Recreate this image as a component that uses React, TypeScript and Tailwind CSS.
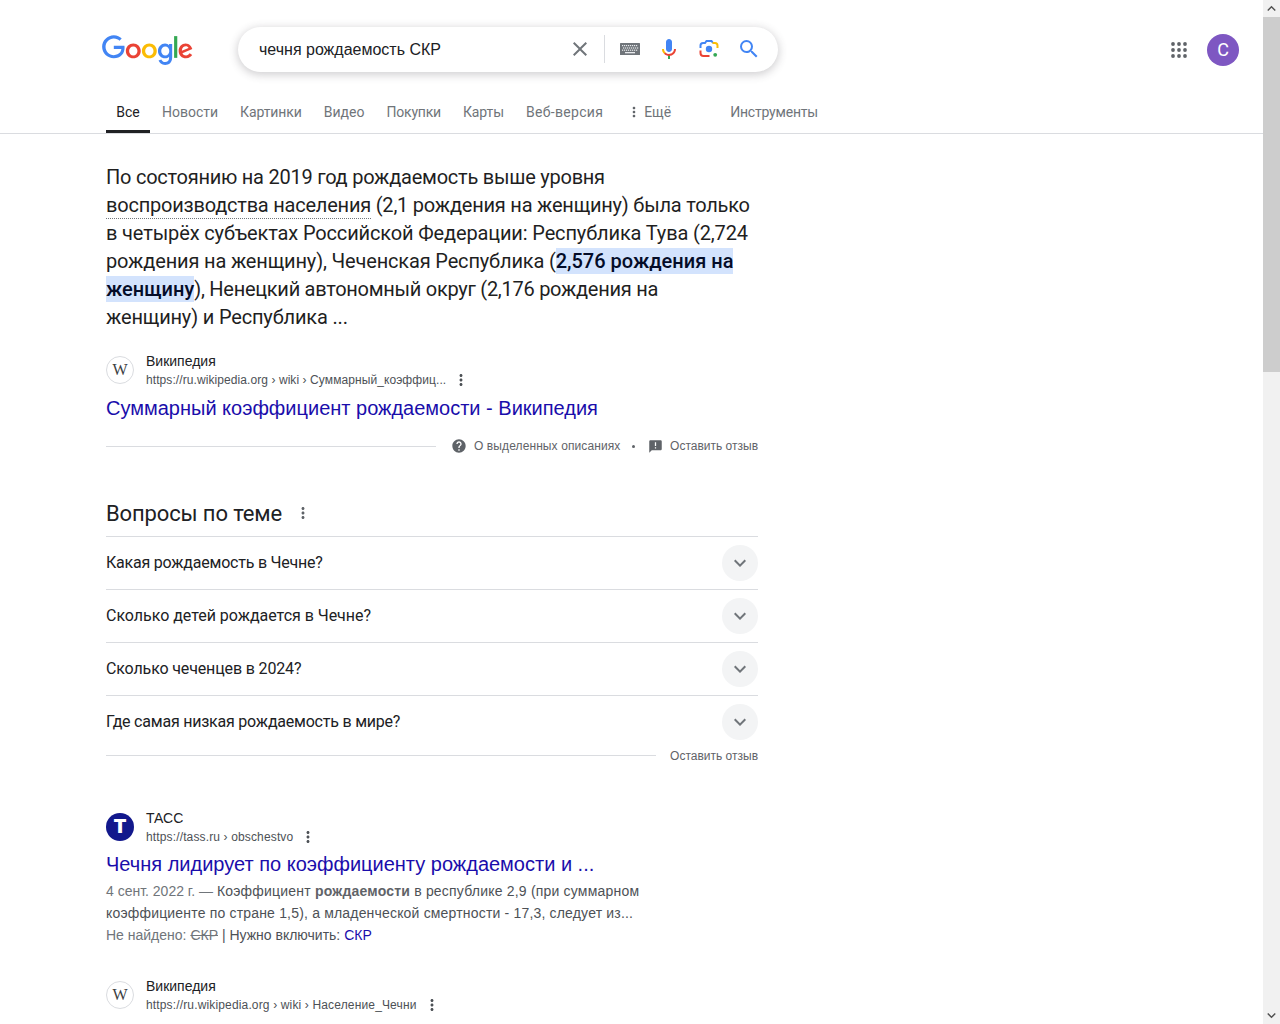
import React from "react";

const Dots = ({ className = "" }: { className?: string }) => (
  <svg viewBox="0 0 24 24" className={className} fill="currentColor">
    <path d="M12 8c1.1 0 2-.9 2-2s-.9-2-2-2-2 .9-2 2 .9 2 2 2zm0 2c-1.1 0-2 .9-2 2s.9 2 2 2 2-.9 2-2-.9-2-2-2zm0 6c-1.1 0-2 .9-2 2s.9 2 2 2 2-.9 2-2-.9-2-2-2z" />
  </svg>
);

const Chevron = ({ className = "" }: { className?: string }) => (
  <svg viewBox="0 0 24 24" className={className} fill="currentColor">
    <path d="M16.59 8.59L12 13.17 7.41 8.59 6 10l6 6 6-6z" />
  </svg>
);

const GoogleLogo = () => (
  <svg viewBox="0 0 272 92" className="w-[91px] h-[31px] block mt-[2px]">
    <path fill="#EA4335" d="M115.75 47.18c0 12.77-9.99 22.18-22.25 22.18s-22.25-9.41-22.25-22.18C71.25 34.32 81.24 25 93.5 25s22.25 9.32 22.25 22.18zm-9.74 0c0-7.98-5.79-13.44-12.51-13.44S80.99 39.2 80.99 47.18c0 7.9 5.79 13.44 12.51 13.44s12.51-5.55 12.51-13.44z" />
    <path fill="#FBBC05" d="M163.75 47.18c0 12.77-9.99 22.18-22.25 22.18s-22.25-9.41-22.25-22.18c0-12.85 9.99-22.18 22.25-22.18s22.25 9.32 22.25 22.18zm-9.74 0c0-7.98-5.79-13.44-12.51-13.44s-12.51 5.46-12.51 13.44c0 7.9 5.79 13.44 12.51 13.44s12.51-5.55 12.51-13.44z" />
    <path fill="#4285F4" d="M209.75 26.34v39.82c0 16.38-9.66 23.07-21.08 23.07-10.75 0-17.22-7.19-19.66-13.07l8.48-3.53c1.51 3.61 5.21 7.87 11.17 7.87 7.31 0 11.84-4.51 11.84-13v-3.19h-.34c-2.18 2.69-6.38 5.04-11.68 5.04-11.09 0-21.25-9.66-21.25-22.09 0-12.52 10.16-22.26 21.25-22.26 5.29 0 9.49 2.35 11.68 4.96h.34v-3.61h9.25zm-8.56 20.92c0-7.81-5.21-13.52-11.84-13.52-6.72 0-12.35 5.71-12.35 13.52 0 7.73 5.63 13.36 12.35 13.36 6.63 0 11.84-5.63 11.84-13.36z" />
    <path fill="#34A853" d="M225 3v65h-9.5V3h9.5z" />
    <path fill="#EA4335" d="M262.02 54.48l7.56 5.04c-2.44 3.61-8.32 9.83-18.48 9.83-12.6 0-22.01-9.74-22.01-22.18 0-13.19 9.49-22.18 20.92-22.18 11.51 0 17.14 9.16 18.98 14.11l1.01 2.52-29.65 12.28c2.27 4.45 5.8 6.72 10.75 6.72 4.96 0 8.4-2.44 10.92-6.14zm-23.27-7.98l19.82-8.23c-1.09-2.77-4.37-4.7-8.23-4.7-4.95 0-11.84 4.37-11.59 12.93z" />
    <path fill="#4285F4" d="M35.29 41.41V32H67c.31 1.64.47 3.58.47 5.68 0 7.06-1.93 15.79-8.15 22.01-6.05 6.3-13.78 9.66-24.02 9.66C16.32 69.35.36 53.89.36 34.91.36 15.93 16.32.47 35.3.47c10.5 0 17.98 4.12 23.6 9.49l-6.64 6.64c-4.03-3.78-9.49-6.72-16.97-6.72-13.86 0-24.7 11.17-24.7 25.03 0 13.86 10.84 25.03 24.7 25.03 8.99 0 14.11-3.61 17.39-6.89 2.66-2.66 4.41-6.46 5.1-11.65l-22.49.01z" />
  </svg>
);

const Keyboard = () => (
  <svg viewBox="0 0 20 12" className="w-[20px] h-[12px] block">
    <rect width="20" height="12" rx="0.5" fill="#70757a" />
    <g fill="#e8eaed">
      {[2, 4, 6, 8, 10, 12, 14, 16].map((x) => (
        <rect key={"a" + x} x={x} y="2" width="1.2" height="1.2" />
      ))}
      {[3, 5, 7, 9, 11, 13, 15, 17].map((x) => (
        <rect key={"b" + x} x={x} y="4.4" width="1.2" height="1.2" />
      ))}
      {[2, 4, 6, 8, 10, 12, 14, 16].map((x) => (
        <rect key={"c" + x} x={x} y="6.6" width="1.2" height="1.2" />
      ))}
      <rect x="5" y="9" width="10" height="1.3" />
    </g>
  </svg>
);

const Mic = () => (
  <svg viewBox="0 0 24 24" className="w-[24px] h-[24px] block">
    <path fill="#4285f4" d="m12 15c1.66 0 3-1.31 3-2.97v-7.02c0-1.66-1.34-3.01-3-3.01s-3 1.34-3 3.01v7.02c0 1.66 1.34 2.97 3 2.97z" />
    <path fill="#34a853" d="m11 18.08h2v3.92h-2z" />
    <path fill="#fbbc04" d="m7.05 16.87c-1.27-1.33-2.05-2.83-2.05-4.87h2c0 1.45 0.56 2.42 1.47 3.38v0.32l-1.15 1.18z" />
    <path fill="#ea4335" d="m12 16.93a4.97 5.25 0 0 1 -3.54 -1.55l-1.41 1.49c1.26 1.34 3.02 2.13 4.95 2.13 3.87 0 6.99-2.92 6.99-7h-1.99c0 2.92-2.24 4.93-5 4.93z" />
  </svg>
);

const Lens = () => (
  <svg viewBox="0 0 20 20" className="w-[20px] h-[20px] block" fill="none" strokeWidth="2">
    <path stroke="#4285f4" d="M1.5 9V6.5a2.5 2.5 0 0 1 2.5-2.5h2l1.5-2h5l1.5 2" />
    <path stroke="#fbbc04" d="M13.5 4h2.5a2.5 2.5 0 0 1 2.5 2.5V9" />
    <path stroke="#ea4335" d="M1.5 11.5V14a3 3 0 0 0 3 3h6" />
    <circle cx="10" cy="10" r="3.2" fill="#4285f4" />
    <circle cx="16.2" cy="15.8" r="1.9" fill="#34a853" />
  </svg>
);

const Search = () => (
  <svg viewBox="0 0 24 24" className="w-[24px] h-[24px] block" fill="#4285f4">
    <path d="M15.5 14h-.79l-.28-.27A6.471 6.471 0 0 0 16 9.5 6.5 6.5 0 1 0 9.5 16c1.61 0 3.09-.59 4.23-1.57l.27.28v.79l5 4.99L20.49 19l-4.99-5zm-6 0C7.01 14 5 11.99 5 9.5S7.01 5 9.5 5 14 7.01 14 9.5 11.99 14 9.5 14z" />
  </svg>
);

const Apps = () => (
  <svg viewBox="0 0 16 16" className="w-[16px] h-[16px] block" fill="#5f6368">
    {[2, 8, 14].map((y) =>
      [2, 8, 14].map((x) => <circle key={x + "-" + y} cx={x} cy={y} r="1.9" />)
    )}
  </svg>
);

const Help = () => (
  <svg viewBox="0 0 24 24" className="w-[16px] h-[16px] block" fill="#5f6368">
    <path d="M12 2C6.48 2 2 6.48 2 12s4.48 10 10 10 10-4.48 10-10S17.52 2 12 2zm1 17h-2v-2h2v2zm2.07-7.75l-.9.92C13.45 12.9 13 13.5 13 15h-2v-.5c0-1.1.45-2.1 1.17-2.83l1.24-1.26c.37-.36.59-.86.59-1.41 0-1.1-.9-2-2-2s-2 .9-2 2H8c0-2.21 1.79-4 4-4s4 1.79 4 4c0 .88-.36 1.68-.93 2.25z" />
  </svg>
);

const Feedback = () => (
  <svg viewBox="0 0 24 24" className="w-[15px] h-[15px] block" fill="#5f6368">
    <path d="M20 2H4c-1.1 0-2 .9-2 2v18l4-4h14c1.1 0 2-.9 2-2V4c0-1.1-.9-2-2-2zm-7 9h-2V5h2v6zm0 4h-2v-2h2v2z" />
  </svg>
);

const WikiIcon = () => (
  <div className="w-[28px] h-[28px] rounded-full border border-[#dadce0] bg-white flex items-center justify-center shrink-0 font-['Liberation_Serif',serif] text-[16px] text-[#3c4043]">
    W
  </div>
);

const TassIcon = () => (
  <div className="w-[28px] h-[28px] rounded-full bg-[#12188c] flex items-center justify-center shrink-0 font-['Inter',sans-serif] font-black text-[19px] text-white">
    T
  </div>
);

const Source = ({
  icon,
  name,
  url,
  track,
}: {
  icon: React.ReactNode;
  name: string;
  url: React.ReactNode;
  track: string;
}) => (
  <div className="flex items-center gap-[12px] h-[38px]">
    {icon}
    <div className="flex flex-col">
      <div className="text-[14px] pt-px leading-[19px] text-[#202124]">{name}</div>
      <div className="flex items-center gap-[6px] h-[18px] text-[12px] text-[#4d5156]">
        <span className={"whitespace-nowrap " + track}>{url}</span>
        <Dots className="w-[18px] h-[18px] text-[#4d5156]" />
      </div>
    </div>
  </div>
);

const tabs = [
  { t: "Новости", c: "" },
  { t: "Картинки", c: "tracking-[-0.1px]" },
  { t: "Видео", c: "" },
  { t: "Покупки", c: "tracking-[-0.2px]" },
  { t: "Карты", c: "tracking-[-0.1px]" },
  { t: "Веб-версия", c: "tracking-[0.3px]" },
];

const questions = [
  { q: "Какая рождаемость в Чечне?", c: "tracking-[-0.22px]" },
  { q: "Сколько детей рождается в Чечне?", c: "tracking-[-0.03px]" },
  { q: "Сколько чеченцев в 2024?", c: "tracking-[-0.14px]" },
  { q: "Где самая низкая рождаемость в мире?", c: "tracking-[-0.22px]" },
];

const Mark = ({ children }: { children: React.ReactNode }) => (
  <span className="bg-[#d3e3fd] text-[#040c28] font-medium py-px tracking-normal">{children}</span>
);

export default function App() {
  return (
    <div className="flex h-[1024px] overflow-hidden bg-white font-['Liberation_Sans',Arial,sans-serif]">
      <div className="w-[1263px] shrink-0">
        <header className="h-[134px] border-b border-[#dadce0] flex flex-col">
          <div className="flex items-center h-[45px] mt-[27px] pl-[102px] pr-[24px]">
            <div className="w-[136px] shrink-0">
              <GoogleLogo />
            </div>
            <div className="w-[540px] h-[45px] rounded-[23px] bg-white shadow-[0_2px_8px_1px_rgba(64,60,67,0.24)] flex items-center pl-[21px] pr-[17px] pb-px">
              <span className="flex-1 pt-[2px] text-[16px] text-[#202124]">чечня рождаемость СКР</span>
              <svg viewBox="0 0 24 24" className="w-[24px] h-[24px] block" fill="#70757a">
                <path d="M19 6.41L17.59 5 12 10.59 6.41 5 5 6.41 10.59 12 5 17.59 6.41 19 12 13.41 17.59 19 19 17.59 13.41 12z" />
              </svg>
              <div className="w-px h-[28px] bg-[#dadce0] ml-[12px] mr-[15px]" />
              <Keyboard />
              <div className="ml-[17px]">
                <Mic />
              </div>
              <div className="ml-[18px]">
                <Lens />
              </div>
              <div className="ml-[18px]">
                <Search />
              </div>
            </div>
            <div className="ml-auto flex items-center gap-[20px]">
              <Apps />
              <div className="w-[32px] h-[32px] rounded-full bg-[#7e57c2] flex items-center justify-center text-white text-[18px] font-['Roboto',sans-serif]">
                С
              </div>
            </div>
          </div>
          <nav className="flex items-stretch h-[61px] pl-[106px] pt-[21px] font-['Roboto',sans-serif] text-[14px] text-[#70757a]">
            <div className="w-[44px] flex justify-center pt-[10px] border-b-[3px] border-[#202124] text-[#202124] leading-[18px]">
              Все
            </div>
            <div className="flex pt-[10px] leading-[18px] ml-[12px] gap-[22px]">
              {tabs.map((x) => (
                <span key={x.t} className={"whitespace-nowrap " + x.c}>
                  {x.t}
                </span>
              ))}
              <span className="flex items-start h-[18px] ml-px whitespace-nowrap">
                <Dots className="w-[16px] h-[16px] mt-px text-[#5f6368]" />
                <span className="ml-[2px]">Ещё</span>
              </span>
              <span className="ml-[37px] whitespace-nowrap tracking-[-0.2px]">Инструменты</span>
            </div>
          </nav>
        </header>

        <main className="w-[652px] ml-[106px]">
          <div className="mt-[29px] text-[20px] leading-[28px] text-[#1f1f1f] font-['Roboto',sans-serif] whitespace-nowrap">
            <div className="tracking-[-0.24px]">По состоянию на 2019 год рождаемость выше уровня</div>
            <div className="tracking-[-0.22px]">
              <span className="inline-block h-[28px] border-b border-dotted border-[#70757a]">
                воспроизводства населения
              </span>{" "}
              (2,1 рождения на женщину) была только
            </div>
            <div className="tracking-[-0.14px]">в четырёх субъектах Российской Федерации: Республика Тува (2,724</div>
            <div className="tracking-[-0.16px]">
              рождения на женщину), Чеченская Республика (<Mark>2,576 рождения на</Mark>
            </div>
            <div className="tracking-[-0.27px]">
              <Mark>женщину</Mark>), Ненецкий автономный округ (2,176 рождения на
            </div>
            <div className="tracking-[-0.17px]">женщину) и Республика ...</div>
          </div>

          <div className="mt-[20px]">
            <Source
              icon={<WikiIcon />}
              name="Википедия"
              track="tracking-[0.08px]"
              url="https://ru.wikipedia.org › wiki › Суммарный_коэффиц..."
            />
          </div>
          <div className="mt-[6px] text-[20px] leading-[26px] text-[#1a0dab]">
            Суммарный коэффициент рождаемости - Википедия
          </div>

          <div className="flex items-center h-[16px] mt-[17px] text-[12px] text-[#5f6368]">
            <div className="w-[330px] h-px bg-[#dadce0]" />
            <div className="ml-[15px]">
              <Help />
            </div>
            <span className="ml-[7px] whitespace-nowrap tracking-[0.1px]">О выделенных описаниях</span>
            <span className="ml-[12px] w-[3px] h-[3px] rounded-full bg-[#5f6368]" />
            <span className="ml-[13px]">
              <Feedback />
            </span>
            <span className="ml-auto whitespace-nowrap">Оставить отзыв</span>
          </div>

          <div className="mt-[42px] h-[36px] pb-[2px] flex items-center tracking-[-0.13px] font-['Roboto',sans-serif] text-[22px] text-[#202124]">
            Вопросы по теме
            <Dots className="w-[18px] h-[18px] ml-[12px] text-[#5f6368]" />
          </div>
          <div className="mt-[4px] font-['Roboto',sans-serif]">
            {questions.map((x) => (
              <div key={x.q} className="h-[53px] border-t border-[#dadce0] flex items-center justify-between text-[16px] text-[#202124]">
                <span className={x.c}>{x.q}</span>
                <div className="w-[36px] h-[36px] rounded-full bg-[#f3f4f5] flex items-center justify-center">
                  <Chevron className="w-[24px] h-[24px] text-[#70757a]" />
                </div>
              </div>
            ))}
          </div>
          <div className="flex items-center h-[16px] mt-[-1px] text-[12px] text-[#5f6368]">
            <div className="w-[550px] h-px bg-[#dadce0]" />
            <span className="ml-auto pt-[2px] whitespace-nowrap">Оставить отзыв</span>
          </div>

          <div className="mt-[45px]">
            <Source
              icon={<TassIcon />}
              name="ТАСС"
              track="tracking-[0.14px]"
              url="https://tass.ru › obschestvo"
            />
          </div>
          <div className="mt-[5px] text-[20px] leading-[26px] text-[#1a0dab]">
            Чечня лидирует по коэффициенту рождаемости и ...
          </div>
          <div className="mt-[3px] text-[14px] leading-[22px] text-[#4d5156] whitespace-nowrap">
            <div className="tracking-[0.2px]">
              <span className="text-[#70757a] tracking-normal">4 сент. 2022 г. — </span>Коэффициент{" "}
              <b className="text-[#5f6368]">рождаемости</b> в республике 2,9 (при суммарном
            </div>
            <div className="tracking-[0.18px]">коэффициенте по стране 1,5), а младенческой смертности - 17,3, следует из...</div>
            <div>
              <span className="text-[#70757a]">Не найдено: </span>
              <s className="text-[#70757a]">СКР</s> | Нужно включить:{" "}
              <span className="text-[#1a0dab]">СКР</span>
            </div>
          </div>

          <div className="mt-[30px]">
            <Source
              icon={<WikiIcon />}
              name="Википедия"
              track="tracking-[0.15px]"
              url="https://ru.wikipedia.org › wiki › Население_Чечни"
            />
          </div>
        </main>
      </div>

      <div className="w-[17px] shrink-0 h-[1024px] bg-[#f1f1f1] flex flex-col">
        <div className="h-[17px] flex items-center justify-center">
          <Chevron className="w-[17px] h-[17px] rotate-180 text-[#505050]" />
        </div>
        <div className="h-[355px] bg-[#cdcdcd]" />
        <div className="flex-1" />
        <div className="h-[17px] flex items-center justify-center">
          <Chevron className="w-[17px] h-[17px] text-[#505050]" />
        </div>
      </div>
    </div>
  );
}
